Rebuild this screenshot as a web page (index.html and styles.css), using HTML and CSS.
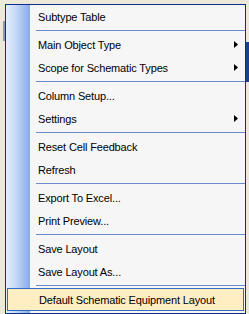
FILE: index.html
```html
<!DOCTYPE html>
<html>
<head>
<meta charset="utf-8">
<link rel="stylesheet" href="styles.css">
</head>
<body>
<div class="menu">
  <div class="item">Subtype Table</div>
  <div class="sep"></div>
  <div class="item sub">Main Object Type<svg class="arrow" width="4" height="7" viewBox="0 0 4 7"><polygon points="0,0 4,3.5 0,7" fill="#000"/></svg></div>
  <div class="item sub">Scope for Schematic Types<svg class="arrow" width="4" height="7" viewBox="0 0 4 7"><polygon points="0,0 4,3.5 0,7" fill="#000"/></svg></div>
  <div class="sep"></div>
  <div class="item">Column Setup...</div>
  <div class="item sub">Settings<svg class="arrow" width="4" height="7" viewBox="0 0 4 7"><polygon points="0,0 4,3.5 0,7" fill="#000"/></svg></div>
  <div class="sep"></div>
  <div class="item">Reset Cell Feedback</div>
  <div class="item">Refresh</div>
  <div class="sep"></div>
  <div class="item">Export To Excel...</div>
  <div class="item">Print Preview...</div>
  <div class="sep"></div>
  <div class="item">Save Layout</div>
  <div class="item">Save Layout As...</div>
  <div class="sep"></div>
  <div class="item active">Default Schematic Equipment Layout</div>
</div>
</body>
</html>
```
FILE: styles.css
```css
html, body {
  margin: 0;
  padding: 0;
}
body {
  width: 249px;
  height: 314px;
  overflow: hidden;
  background-color: #ece9d8;
  background-image:
    linear-gradient(#1c3f94, #1c3f94),
    linear-gradient(#7f9db9, #7f9db9);
  background-repeat: no-repeat;
  background-size: 3px 40px, 2px 20px;
  background-position: 246px 42px, 3px 21px;
  font-family: "Liberation Sans", Arial, sans-serif;
  font-size: 11px;
  letter-spacing: -0.15px;
  color: #000;
}
.menu {
  margin: 4px 0 0 5px;
  width: 239px;
  height: 308px;
  border: 1px solid #0b2e8f;
  padding: 0;
  background: linear-gradient(to right, #e4effd 0, #c4d8f6 10px, #88abe5 24px, #f6f6f6 24px);
  display: flex;
  flex-direction: column;
}
.item {
  height: 23px;
  display: flex;
  align-items: center;
  padding-left: 32px;
  padding-right: 7px;
  box-sizing: border-box;
  white-space: nowrap;
}
.item.sub {
  justify-content: space-between;
}
.arrow {
  display: block;
  flex: none;
}
.sep {
  height: 5px;
  margin-left: 30px;
  box-sizing: border-box;
  padding-top: 2px;
}
.sep::after {
  content: "";
  display: block;
  height: 1px;
  background: #6a8ccf;
}
.item.active {
  margin: 0 1px;
  padding-left: 31px;
  border: 1px solid #316ac5;
  background: #ffeec2;
}
```
